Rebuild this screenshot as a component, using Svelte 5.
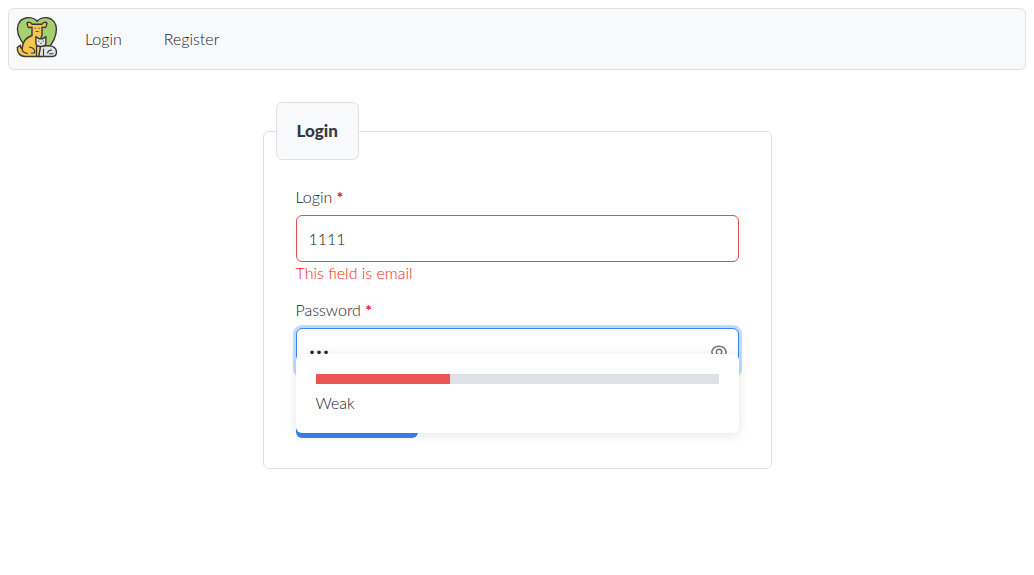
<script>
  let login = $state('1111');
  let password = $state('123');
  let revealed = $state(false);
  const strength = 33.33;
</script>

<header>
  <a class="logo" href="#home" aria-label="Home">
    <svg viewBox="0 0 42 42" width="42" height="42" stroke="#3b3938" stroke-width="1.4" stroke-linejoin="round" stroke-linecap="round">
      <path fill="#a6cf72" d="M21.200 5.200C18.200 2 14.700 1.500 11.200 1.700C5.200 2.300 1.400 7 1.400 13c0 8 5.300 14 10.800 20l9 6l10-6c6-6 9.200-12 9.200-20c0-6-4-10.700-9.200-11.300C27.200 1.500 23.700 2 21.200 5.200Z" />
      <path fill="#f6c54b" d="M16 8.300c-1-2.200-3.500-2.500-5-1.300c.6 1.500.2 3.100 1.300 4.100c1.100.9 2.400.4 3.700 0v8.400C10.200 21.500 6.500 26 6.200 32.500c-1.300-.4-2-1.600-1.700-3.200L1.300 31.300c-.3 5 2.500 9.200 7.500 9.200H25V22l1-2.500v-8.400c1.300.4 2.600.9 3.700 0c1.100-1 .7-2.600 1.300-4.100c-1.500-1.200-4-.9-5 1.300Z" />
      <path fill="none" d="M6.200 32.500c0 2.500 2 4.500 5 4.800M13.500 31c4 .5 6 3 5 6h-3M20.500 30v10" stroke-width="1.2" />
      <path fill="#e2e3e5" d="M24.500 29.500c0 4-1.500 7-1.500 11h13.500c2.500 0 4-2 4-4.500c0-4-3.500-6.300-8-6.300h-4Z" />
      <path fill="#e2e3e5" d="m19.900 20.700l3 2h4l3-2v6.300c0 2-2 3.500-5 3.500s-5-1.500-5-3.500Z" />
      <path fill="none" d="M27.500 33v7M31.500 37c.5-2 2-3 4-3M33.500 37.700h3.500" stroke-width="1.100" />
      <path fill="none" d="M18.900 12.300h.5M22.800 12.300h.5M20.200 15.500h2M22.500 25.200h.5M27 25.200h.5M24.700 27.300h.8" stroke-width=".9" />
    </svg>
  </a>
  <nav>
    <a href="#login">Login</a>
    <a href="#register">Register</a>
  </nav>
</header>

<main>
  <form onsubmit={(e) => e.preventDefault()}>
    <fieldset>
      <legend>Login</legend>
      <div class="content">
        <div class="field">
          <label for="login">Login <span class="star">*</span></label>
          <input id="login" class="invalid" type="text" bind:value={login} aria-invalid="true" aria-describedby="login-error" />
          <small id="login-error">This field is email</small>
        </div>
        <div class="field">
          <label for="password">Password <span class="star">*</span></label>
          <div class="password">
            <input id="password" class="active" type={revealed ? 'text' : 'password'} bind:value={password} />
            <button class="eye" type="button" aria-label="Show password" onclick={() => (revealed = !revealed)}>
              <svg viewBox="0 0 16 16" width="16" height="16" fill="none" stroke="#6c757d" stroke-width="1.400">
                <path d="M.7 8C1.500 5 4 2.300 8 2.300S14.500 5 15.300 8C14.500 11 12 13.700 8 13.700S1.500 11 .7 8Z" />
                <circle cx="8" cy="8" r="2.700" />
              </svg>
            </button>
            <div class="panel">
              <div class="meter"><div class="bar" style="width: {strength}%"></div></div>
              <div>Weak</div>
            </div>
          </div>
        </div>
        <button class="submit" type="submit" aria-label="Submit"></button>
      </div>
    </fieldset>
  </form>
</main>

<style>
  :global(body) {
    margin: 0;
    background: #fff;
  }
  :global(#app) {
    padding: 8px;
    font: 300 16px/20px Lato, 'Open Sans', sans-serif;
    color: #212529;
  }
  header {
    display: flex;
    align-items: center;
    gap: 7px;
    padding: 7px;
    background: #f8f9fb;
    border: 1px solid #dee2e6;
    border-radius: 6px;
  }
  .logo,
  .logo svg {
    display: block;
  }
  .logo {
    padding: 0 0 4px;
  }
  nav {
    display: flex;
    gap: 2px;
  }
  nav a {
    padding: 12px 20px;
    color: inherit;
    text-decoration: none;
  }
  main {
    display: flex;
    justify-content: center;
    padding-top: 32px;
  }
  form {
    width: 50%;
  }
  fieldset {
    margin: 0;
    padding: 0 12px 10px;
    border: 1px solid #dee2e6;
    border-radius: 6px;
  }
  legend {
    padding: 18px 20px;
    background: #f8f9fb;
    border: 1px solid #dee2e6;
    border-radius: 6px;
    color: #343a40;
    font-size: 17px;
    font-weight: 900;
  }
  .content {
    padding: 27px 20px 20px;
  }
  .field {
    margin-bottom: 16px;
  }
  label {
    display: block;
    margin-bottom: 8px;
  }
  .star {
    color: #d32020;
    font-weight: 700;
  }
  input {
    display: block;
    box-sizing: border-box;
    width: 100%;
    height: 47px;
    padding: 12px;
    border: 1px solid #ced4da;
    border-radius: 6px;
    outline: none;
    background: #fff;
    color: #212529;
    font: inherit;
  }
  .invalid {
    border-color: #e24c4c;
  }
  .active {
    padding-right: 40px;
    border-color: #3b82f6;
    box-shadow: 0 0 0 3px #bfdbfe;
    font-size: 12px;
  }
  small {
    display: block;
    padding: 1px 0;
    color: #f41f12;
    font-size: 16px;
  }
  .password {
    position: relative;
  }
  .eye {
    position: absolute;
    top: 16px;
    right: 12px;
    padding: 0;
    border: 0;
    background: none;
  }
  .eye svg {
    display: block;
  }
  .panel {
    position: absolute;
    top: 26px;
    left: 0;
    right: 0;
    padding: 20px;
    border-radius: 6px;
    background: #fff;
    box-shadow: 0 2px 12px rgba(0, 0, 0, 0.1);
  }
  .meter {
    height: 10px;
    margin-bottom: 9px;
    background: #dee2e6;
  }
  .bar {
    height: 100%;
    background: #ea5455;
  }
  .submit {
    display: block;
    width: 122px;
    height: 47px;
    border: 0;
    border-radius: 6px;
    background: #3b82f6;
  }
</style>
